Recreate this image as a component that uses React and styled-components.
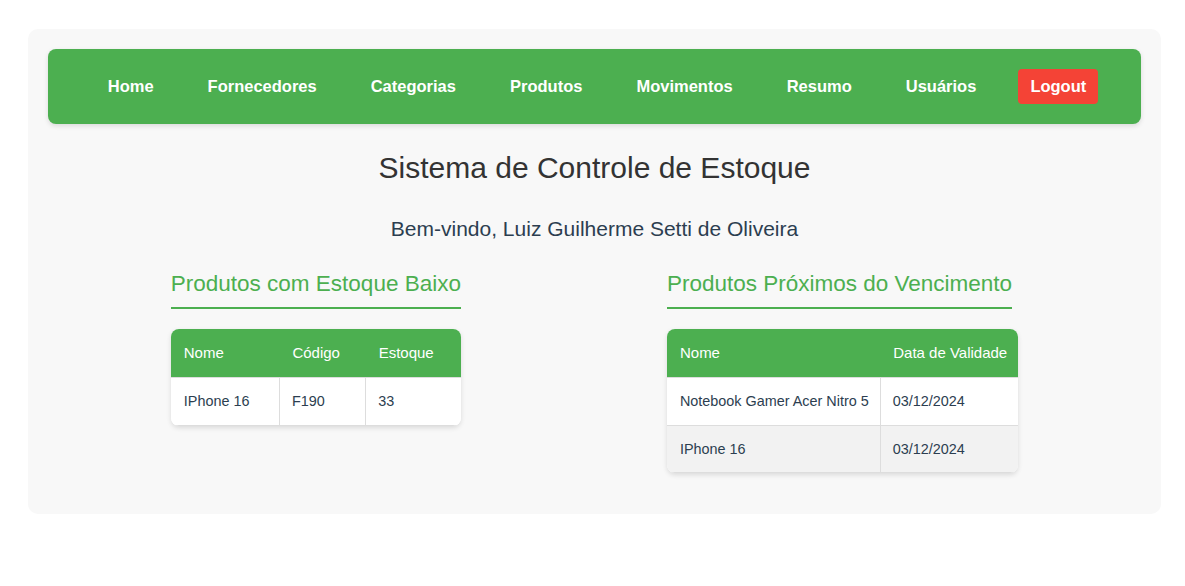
import React from "react";
import styled, { createGlobalStyle } from "styled-components";

const GlobalStyle = createGlobalStyle`
  html, body {
    margin: 0;
    padding: 0;
    background: #ffffff;
    font-family: "Liberation Sans", Arial, sans-serif;
  }
  body {
    padding: 29px 24px 0 28px;
  }
`;

const Container = styled.div`
  background: #f8f8f8;
  border-radius: 10px;
  padding: 20px 20px 41px;
`;

const Nav = styled.nav`
  background: #4caf50;
  border-radius: 8px;
  box-shadow: 0 2px 5px rgba(0, 0, 0, 0.12);
  padding: 20px 0 20px 5px;
`;

const NavList = styled.ul`
  list-style: none;
  margin: 0;
  padding: 0;
  display: flex;
  justify-content: center;
  align-items: center;
  gap: 30px;
`;

const NavLink = styled.a`
  display: block;
  color: #ffffff;
  text-decoration: none;
  font-weight: bold;
  font-size: 16.5px;
  line-height: 19px;
  padding: 8px 12px;
  border-radius: 4px;
  background: ${(p) => (p.$danger ? "#f44336" : "transparent")};
`;

const Title = styled.h1`
  margin: 26px 0 0;
  text-align: center;
  font-size: 30px;
  font-weight: normal;
  color: #333333;
  line-height: 35px;
`;

const Welcome = styled.p`
  margin: 32px 0 0;
  text-align: center;
  font-size: 21px;
  line-height: 24px;
  color: #2c3e50;
`;

const Sections = styled.div`
  margin-top: 29px;
  display: flex;
  justify-content: center;
  align-items: flex-start;
  gap: 206px;
`;

const Section = styled.section`
  display: flex;
  flex-direction: column;
  align-items: stretch;
`;

const SectionTitle = styled.h2`
  align-self: flex-start;
  margin: 0 0 20px;
  padding: 1px 0 10px;
  border-bottom: 2px solid #4caf50;
  color: #4caf50;
  font-size: 22.5px;
  line-height: 26px;
  font-weight: normal;
`;

const Table = styled.table`
  width: 100%;
  border-collapse: collapse;
  background: #ffffff;
  border-radius: 8px;
  overflow: hidden;
  box-shadow: 0 2px 5px rgba(0, 0, 0, 0.12);
`;

const Th = styled.th`
  background: #4caf50;
  color: #ffffff;
  font-weight: normal;
  font-size: 15px;
  line-height: 17px;
  text-align: left;
  padding: 15px 11px 16px 13px;
  white-space: nowrap;
`;

const Tr = styled.tr`
  background: ${(p) => (p.$striped ? "#f2f2f2" : "#ffffff")};
`;

const Td = styled.td`
  color: #2c3e50;
  font-size: 14.4px;
  line-height: 16.5px;
  padding: 15px 11px 15px 12px;
  border: 1px solid #dddddd;
  white-space: nowrap;
  &:first-child { border-left: none; padding-left: 13px; }
  &:last-child { border-right: none; }
`;

const links = [
  "Home",
  "Fornecedores",
  "Categorias",
  "Produtos",
  "Movimentos",
  "Resumo",
  "Usuários",
];

const lowStock = [{ nome: "IPhone 16", codigo: "F190", estoque: "33" }];
const expiring = [
  { nome: "Notebook Gamer Acer Nitro 5", data: "03/12/2024" },
  { nome: "IPhone 16", data: "03/12/2024" },
];

export default function App() {
  return (
    <>
      <GlobalStyle />
      <Container>
        <Nav>
          <NavList>
            {links.map((l) => (
              <li key={l}>
                <NavLink href="#">{l}</NavLink>
              </li>
            ))}
            <li>
              <NavLink href="#" $danger>
                Logout
              </NavLink>
            </li>
          </NavList>
        </Nav>
        <Title>Sistema de Controle de Estoque</Title>
        <Welcome>Bem-vindo, Luiz Guilherme Setti de Oliveira</Welcome>
        <Sections>
          <Section>
            <SectionTitle>Produtos com Estoque Baixo</SectionTitle>
            <Table>
              <thead>
                <tr>
                  <Th>Nome</Th>
                  <Th>Código</Th>
                  <Th>Estoque</Th>
                </tr>
              </thead>
              <tbody>
                {lowStock.map((r, i) => (
                  <Tr key={i} $striped={i % 2 === 1}>
                    <Td>{r.nome}</Td>
                    <Td>{r.codigo}</Td>
                    <Td>{r.estoque}</Td>
                  </Tr>
                ))}
              </tbody>
            </Table>
          </Section>
          <Section>
            <SectionTitle>Produtos Próximos do Vencimento</SectionTitle>
            <Table>
              <thead>
                <tr>
                  <Th>Nome</Th>
                  <Th>Data de Validade</Th>
                </tr>
              </thead>
              <tbody>
                {expiring.map((r, i) => (
                  <Tr key={i} $striped={i % 2 === 1}>
                    <Td>{r.nome}</Td>
                    <Td>{r.data}</Td>
                  </Tr>
                ))}
              </tbody>
            </Table>
          </Section>
        </Sections>
      </Container>
    </>
  );
}
